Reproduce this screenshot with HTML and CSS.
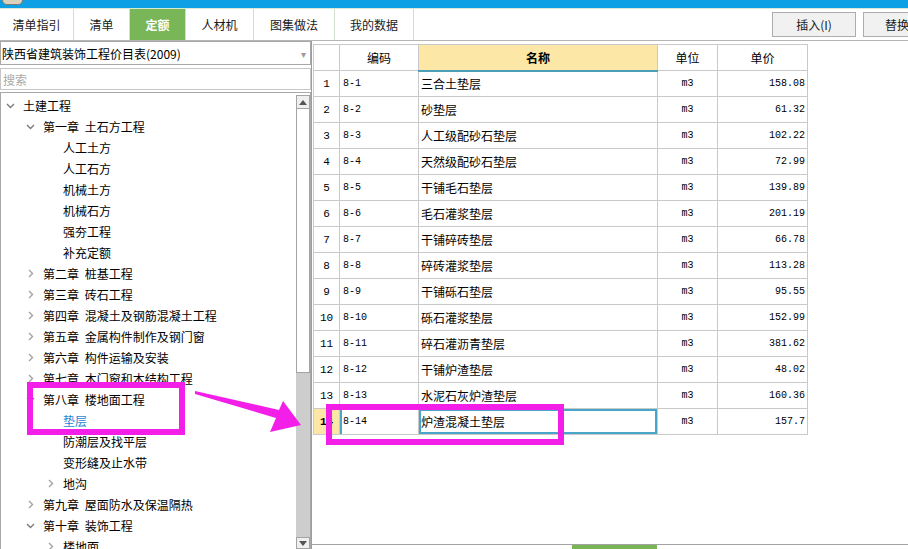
FILE: index.html
```html
<!DOCTYPE html>
<html lang="zh-CN">
<head>
<meta charset="utf-8">
<title>定额</title>
<link rel="stylesheet" href="styles.css">
</head>
<body>
<div class="app">
  <div class="topbar"><span class="logo"></span></div>
  <div class="tabbar">
    <div class="tab w74">清单指引</div>
    <div class="tab w56">清单</div>
    <div class="tab w56 active">定额</div>
    <div class="tab w68">人材机</div>
    <div class="tab w81">图集做法</div>
    <div class="tab w79">我的数据</div>
    <div class="tools">
      <div class="btn">插入(I)</div>
      <div class="btn btn-sm">替换</div>
    </div>
  </div>
  <div class="main">
    <div class="left">
      <div class="select"><span>陕西省建筑装饰工程价目表(2009)</span><span class="caret">▾</span></div>
      <div class="search">搜索</div>
      <div class="tree">
        <div class="tree-list">
          <div class="node lv0"><span class="exp"><svg width="9" height="6" viewBox="0 0 9 6"><polyline points="1,1 4.5,4.5 8,1" class="chev"/></svg></span>土建工程</div>
          <div class="node lv1"><span class="exp"><svg width="9" height="6" viewBox="0 0 9 6"><polyline points="1,1 4.5,4.5 8,1" class="chev"/></svg></span>第一章 土石方工程</div>
          <div class="node lv2"><span class="exp"></span>人工土方</div>
          <div class="node lv2"><span class="exp"></span>人工石方</div>
          <div class="node lv2"><span class="exp"></span>机械土方</div>
          <div class="node lv2"><span class="exp"></span>机械石方</div>
          <div class="node lv2"><span class="exp"></span>强夯工程</div>
          <div class="node lv2"><span class="exp"></span>补充定额</div>
          <div class="node lv1"><span class="exp"><svg width="6" height="9" viewBox="0 0 6 9"><polyline points="1,1 4.5,4.5 1,8" class="chev light"/></svg></span>第二章 桩基工程</div>
          <div class="node lv1"><span class="exp"><svg width="6" height="9" viewBox="0 0 6 9"><polyline points="1,1 4.5,4.5 1,8" class="chev light"/></svg></span>第三章 砖石工程</div>
          <div class="node lv1"><span class="exp"><svg width="6" height="9" viewBox="0 0 6 9"><polyline points="1,1 4.5,4.5 1,8" class="chev light"/></svg></span>第四章 混凝土及钢筋混凝土工程</div>
          <div class="node lv1"><span class="exp"><svg width="6" height="9" viewBox="0 0 6 9"><polyline points="1,1 4.5,4.5 1,8" class="chev light"/></svg></span>第五章 金属构件制作及钢门窗</div>
          <div class="node lv1"><span class="exp"><svg width="6" height="9" viewBox="0 0 6 9"><polyline points="1,1 4.5,4.5 1,8" class="chev light"/></svg></span>第六章 构件运输及安装</div>
          <div class="node lv1"><span class="exp"><svg width="6" height="9" viewBox="0 0 6 9"><polyline points="1,1 4.5,4.5 1,8" class="chev light"/></svg></span>第七章 木门窗和木结构工程</div>
          <div class="node lv1"><span class="exp"><svg width="9" height="6" viewBox="0 0 9 6"><polyline points="1,1 4.5,4.5 8,1" class="chev"/></svg></span>第八章 楼地面工程</div>
          <div class="node lv2 current"><span class="exp"></span>垫层</div>
          <div class="node lv2"><span class="exp"></span>防潮层及找平层</div>
          <div class="node lv2"><span class="exp"></span>变形缝及止水带</div>
          <div class="node lv2"><span class="exp"><svg width="6" height="9" viewBox="0 0 6 9"><polyline points="1,1 4.5,4.5 1,8" class="chev light"/></svg></span>地沟</div>
          <div class="node lv1"><span class="exp"><svg width="6" height="9" viewBox="0 0 6 9"><polyline points="1,1 4.5,4.5 1,8" class="chev light"/></svg></span>第九章 屋面防水及保温隔热</div>
          <div class="node lv1"><span class="exp"><svg width="9" height="6" viewBox="0 0 9 6"><polyline points="1,1 4.5,4.5 8,1" class="chev"/></svg></span>第十章 装饰工程</div>
          <div class="node lv2"><span class="exp"><svg width="6" height="9" viewBox="0 0 6 9"><polyline points="1,1 4.5,4.5 1,8" class="chev light"/></svg></span>楼地面</div>
        </div>
        <div class="scroll">
          <div class="sbtn"><svg width="8" height="5" viewBox="0 0 8 5"><polygon points="0,5 4,0 8,5" fill="#555"/></svg></div>
          <div class="thumb"></div>
          <div class="track"></div>
          <div class="sbtn down"><svg width="8" height="5" viewBox="0 0 8 5"><polygon points="0,0 8,0 4,5" fill="#555"/></svg></div>
        </div>
      </div>
    </div>
    <div class="right">
      <div class="grid-area">
        <table class="grid">
          <colgroup><col class="c-num"><col class="c-code"><col class="c-name"><col class="c-unit"><col class="c-price"></colgroup>
          <thead>
            <tr><th></th><th>编码</th><th class="h-name">名称</th><th>单位</th><th>单价</th></tr>
          </thead>
          <tbody>
            <tr><td class="num">1</td><td class="code">8-1</td><td class="name">三合土垫层</td><td class="unit">m3</td><td class="price">158.08</td></tr>
            <tr><td class="num">2</td><td class="code">8-2</td><td class="name">砂垫层</td><td class="unit">m3</td><td class="price">61.32</td></tr>
            <tr><td class="num">3</td><td class="code">8-3</td><td class="name">人工级配砂石垫层</td><td class="unit">m3</td><td class="price">102.22</td></tr>
            <tr><td class="num">4</td><td class="code">8-4</td><td class="name">天然级配砂石垫层</td><td class="unit">m3</td><td class="price">72.99</td></tr>
            <tr><td class="num">5</td><td class="code">8-5</td><td class="name">干铺毛石垫层</td><td class="unit">m3</td><td class="price">139.89</td></tr>
            <tr><td class="num">6</td><td class="code">8-6</td><td class="name">毛石灌浆垫层</td><td class="unit">m3</td><td class="price">201.19</td></tr>
            <tr><td class="num">7</td><td class="code">8-7</td><td class="name">干铺碎砖垫层</td><td class="unit">m3</td><td class="price">66.78</td></tr>
            <tr><td class="num">8</td><td class="code">8-8</td><td class="name">碎砖灌浆垫层</td><td class="unit">m3</td><td class="price">113.28</td></tr>
            <tr><td class="num">9</td><td class="code">8-9</td><td class="name">干铺砾石垫层</td><td class="unit">m3</td><td class="price">95.55</td></tr>
            <tr><td class="num">10</td><td class="code">8-10</td><td class="name">砾石灌浆垫层</td><td class="unit">m3</td><td class="price">152.99</td></tr>
            <tr><td class="num">11</td><td class="code">8-11</td><td class="name">碎石灌沥青垫层</td><td class="unit">m3</td><td class="price">381.62</td></tr>
            <tr><td class="num">12</td><td class="code">8-12</td><td class="name">干铺炉渣垫层</td><td class="unit">m3</td><td class="price">48.02</td></tr>
            <tr><td class="num">13</td><td class="code">8-13</td><td class="name">水泥石灰炉渣垫层</td><td class="unit">m3</td><td class="price">160.36</td></tr>
            <tr class="row-cur"><td class="num num-cur">14</td><td class="code code-cur">8-14</td><td class="name sel">炉渣混凝土垫层</td><td class="unit">m3</td><td class="price">157.7</td></tr>
          </tbody>
        </table>
      </div>
      <div class="bottom"><div class="handle"></div></div>
    </div>
  </div>
  <svg class="overlay" width="908" height="549" viewBox="0 0 908 549">
    <rect x="30" y="385" width="152" height="47" fill="none" stroke="#f31fe8" stroke-width="6"/>
    <rect x="329" y="407" width="232" height="35" fill="none" stroke="#f31fe8" stroke-width="6"/>
    <polygon points="195,391 279,410 283,401 301,425 270,432 276,418 195,394" fill="#f31fe8"/>
  </svg>
</div>
</body>
</html>
```
FILE: styles.css
```css
* { box-sizing: border-box; }
html, body { margin: 0; padding: 0; }
body {
  width: 908px;
  height: 549px;
  overflow: hidden;
  background: #fff;
  color: #000;
  font-family: "Noto Sans CJK SC", "Noto Sans", sans-serif;
  font-size: 12px;
}
.app {
  position: relative;
  width: 908px;
  height: 549px;
  display: flex;
  flex-direction: column;
  overflow: hidden;
}
.topbar {
  flex: none;
  height: 9px;
  background: #0ea0e4;
  border-bottom: 1px solid #d6ead6;
  display: flex;
}
.logo {
  width: 21px;
  height: 5px;
  margin-left: 2px;
  background: #d8d2bf;
  border: 1px solid #7d7a70;
  border-top: none;
  border-radius: 0 0 10px 10px;
}
.tabbar {
  flex: none;
  height: 32px;
  display: flex;
  align-items: stretch;
  border-bottom: 1px solid #b5b5b5;
  overflow: hidden;
}
.tab {
  flex: none;
  display: flex;
  align-items: center;
  justify-content: center;
  border-right: 1px solid #d3dfcb;
  color: #1a1a1a;
}
.w74 { width: 74px; }
.w56 { width: 56px; }
.w68 { width: 68px; }
.w81 { width: 81px; }
.w79 { width: 79px; }
.tab.active {
  background: #79b657;
  color: #fff;
  font-weight: bold;
}
.tools {
  margin-left: auto;
  margin-right: -23px;
  display: flex;
  align-items: center;
  gap: 7px;
  flex: none;
}
.btn {
  width: 84px;
  height: 25px;
  border: 1px solid #adadad;
  background: #f1f1f1;
  display: flex;
  align-items: center;
  justify-content: center;
  color: #1a1a1a;
}
.btn-sm { width: 68px; }
.main {
  flex: 1;
  min-height: 0;
  display: flex;
}
.left {
  width: 311px;
  flex: none;
  display: flex;
  flex-direction: column;
}
.select {
  height: 24px;
  flex: none;
  border: 1px solid #a8a8a8;
  margin-bottom: 3px;
  padding: 0 4px 0 1px;
  display: flex;
  align-items: center;
  justify-content: space-between;
  white-space: nowrap;
}
.caret { color: #9a9a9a; font-size: 10px; }
.search {
  height: 22px;
  flex: none;
  border: 1px solid #c6c6c6;
  margin-bottom: 2px;
  padding-left: 2px;
  display: flex;
  align-items: center;
  color: #a9a9a9;
}
.tree {
  flex: 1;
  min-height: 0;
  border: 1px solid #a8a8a8;
  border-bottom: none;
  display: flex;
}
.tree-list {
  flex: 1;
  overflow: hidden;
  padding-top: 2px;
}
.node {
  height: 21px;
  display: flex;
  align-items: center;
  white-space: nowrap;
  word-spacing: 3px;
}
.lv0 { padding-left: 0; }
.lv1 { padding-left: 20px; }
.lv2 { padding-left: 40px; }
.exp {
  width: 19px;
  margin-right: 3px;
  flex: none;
  display: flex;
  align-items: center;
  justify-content: center;
}
.exp svg { display: block; }
.chev { fill: none; stroke: #7b7b7b; stroke-width: 1.4; }
.chev.light { stroke: #a3a3a3; }
.node.current { color: #1f87d4; }
.scroll {
  width: 14px;
  flex: none;
  display: flex;
  flex-direction: column;
  padding-top: 2px;
}
.sbtn {
  height: 14px;
  flex: none;
  border: 1px solid #a4a4a4;
  background: #efefef;
  display: flex;
  align-items: center;
  justify-content: center;
}
.sbtn.down { height: 12px; }
.thumb {
  height: 264px;
  flex: none;
  border: 1px solid #a4a4a4;
  border-top: none;
  background: #fff;
}
.track {
  flex: 1;
  background: #cdcdcd;
}
.right {
  flex: 1;
  min-width: 0;
  display: flex;
  flex-direction: column;
  border-left: 1px solid #9d9d9d;
}
.grid-area {
  flex: 1;
  min-height: 0;
  padding: 3px 0 0 1px;
  border-bottom: 1px solid #a3a3a3;
  overflow: hidden;
}
.bottom {
  height: 4px;
  flex: none;
  padding-left: 260px;
}
.handle {
  width: 85px;
  height: 4px;
  background: #78b555;
}
.grid {
  border-collapse: collapse;
  table-layout: fixed;
  width: 494px;
}
.c-num { width: 26px; }
.c-code { width: 79px; }
.c-name { width: 239px; }
.c-unit { width: 60px; }
.c-price { width: 90px; }
.grid th, .grid td {
  border: 1px solid #c9c9c9;
  height: 26px;
  padding: 0;
  white-space: nowrap;
  overflow: hidden;
}
.grid th {
  font-weight: normal;
  text-align: center;
}
.grid th.h-name {
  background: #fce7a6;
  font-weight: bold;
  border-bottom: 2px solid #4c9fb6;
}
.num {
  text-align: center;
  font-family: "Liberation Mono", monospace;
  font-size: 11px;
}
.code {
  padding-left: 3px !important;
  font-family: "Liberation Mono", monospace;
  font-size: 10px;
}
.name { padding-left: 2px !important; }
.unit {
  text-align: center;
  font-family: "Liberation Mono", monospace;
  font-size: 10px;
}
.price {
  text-align: right;
  padding-right: 2px !important;
  font-family: "Liberation Mono", monospace;
  font-size: 10px;
}
.num-cur {
  background: #fce7a6;
  font-weight: bold;
}
.code-cur { box-shadow: inset 2px 0 0 #49a6c8; }
.sel { box-shadow: inset 0 0 0 2px #49a6c8; }
.overlay {
  position: absolute;
  left: 0;
  top: 0;
  pointer-events: none;
}
```
